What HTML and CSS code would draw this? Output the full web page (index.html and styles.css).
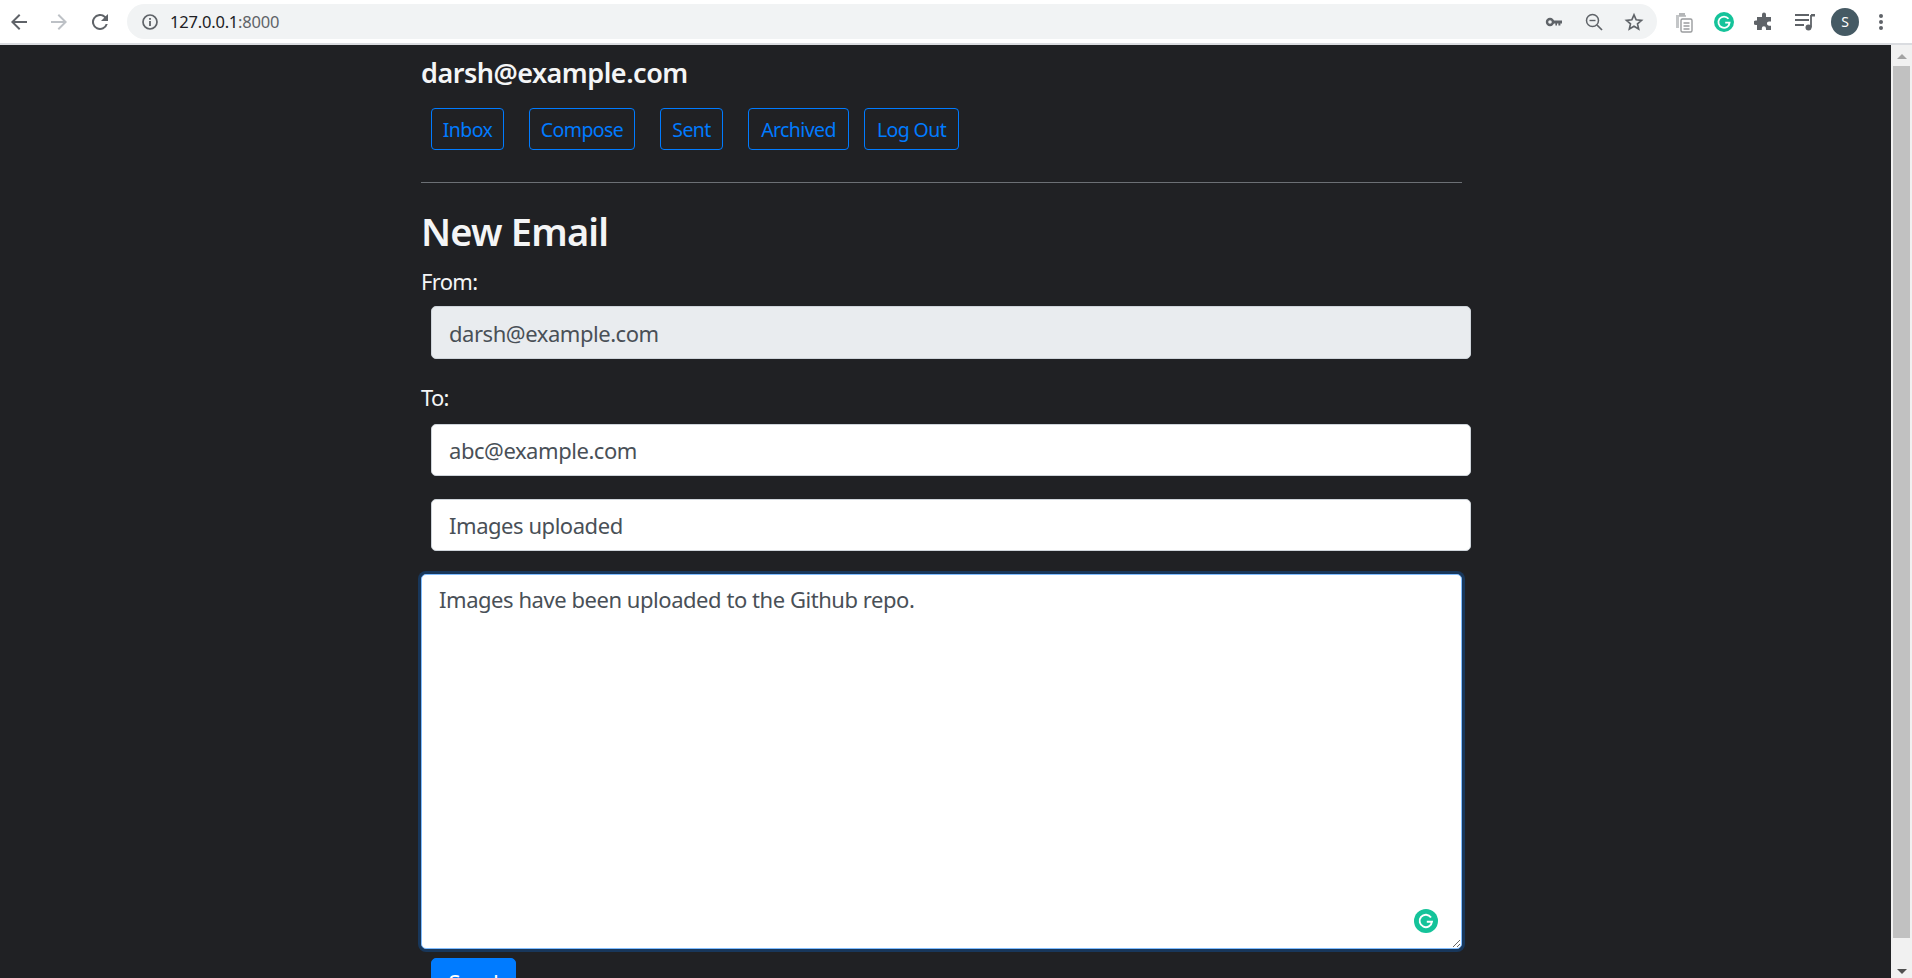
FILE: index.html
```html
<!DOCTYPE html>
<html lang="en">
<head>
    <meta charset="UTF-8">
    <meta name="viewport" content="width=device-width, initial-scale=1.0">
    <title>Mail</title>
    <link rel="stylesheet" href="styles.css">
</head>
<body>
    <header class="toolbar">
        <svg class="tool" width="24" height="24" viewBox="0 0 24 24"><path d="M20 11H7.8l5.6-5.6L12 4l-8 8 8 8 1.4-1.4L7.8 13H20z" fill="#5f6368"/></svg>
        <svg class="tool tool-forward" width="24" height="24" viewBox="0 0 24 24"><path d="M12 4l-1.4 1.4 5.6 5.6H4v2h12.2l-5.6 5.6L12 20l8-8z" fill="#bdc1c6"/></svg>
        <svg class="tool tool-reload" width="24" height="24" viewBox="0 0 24 24"><path d="M17.65 6.35A8 8 0 1 0 19.73 14h-2.08A6 6 0 1 1 12 6c1.66 0 3.14.69 4.22 1.78L13 11h7V4z" fill="#5f6368"/></svg>
        <div class="omnibox">
            <svg width="18" height="18" viewBox="0 0 18 18"><circle cx="9" cy="9" r="7" fill="none" stroke="#5f6368" stroke-width="1.7"/><rect x="8.1" y="8" width="1.8" height="5" fill="#5f6368"/><rect x="8.1" y="5" width="1.8" height="1.8" fill="#5f6368"/></svg>
            <span class="url">127.0.0.1<span class="url-port">:8000</span></span>
            <span class="omni-icons">
                <svg width="20" height="20" viewBox="0 0 20 20"><circle cx="6" cy="10" r="3" fill="none" stroke="#5f6368" stroke-width="2.4"/><path d="M9 8.6h9v2.8h-1.6v2h-2v-2h-1.4v2h-1.6v-2H9z" fill="#5f6368"/></svg>
                <svg width="20" height="20" viewBox="0 0 20 20"><circle cx="8.5" cy="8.5" r="6" fill="none" stroke="#5f6368" stroke-width="1.5"/><path d="M13 13l5 5" stroke="#5f6368" stroke-width="1.7"/><path d="M5.5 8.5h6" stroke="#5f6368" stroke-width="1.4"/></svg>
                <svg width="20" height="20" viewBox="0 0 24 24"><path d="M12 3.5l2.6 5.9 6.4.6-4.8 4.2 1.4 6.3-5.6-3.3-5.6 3.3 1.4-6.3L3 10l6.4-.6z" fill="none" stroke="#5f6368" stroke-width="2"/></svg>
            </span>
        </div>
        <div class="extensions">
            <svg width="20" height="22" viewBox="0 0 20 22"><path d="M2 4h10v2H5v11H2z" fill="#c4c6c8"/><path d="M5 2h6v3H5z" fill="#b4b6b8"/><rect x="7" y="8" width="11" height="13" rx="1.5" fill="#fff" stroke="#9a9c9e" stroke-width="1.4"/><path d="M9.5 12h6M9.5 15h6M9.5 18h6" stroke="#9a9c9e" stroke-width="1.3"/></svg>
            <span class="g-badge">
                <svg width="20" height="20" viewBox="0 0 20 20"><circle cx="10" cy="10" r="10" fill="#15c39a"/><path d="M14.5 6.8A5.6 5.6 0 1 0 15.6 10.6H11.2" fill="none" stroke="#fff" stroke-width="1.8"/></svg>
            </span>
            <svg width="20" height="20" viewBox="0 0 20 20"><path d="M8 2.5a2 2 0 0 1 4 0V5h5v4.5h-2a2.1 2.1 0 0 0 0 4.2h2V18h-5v-1.6a2.1 2.1 0 0 0-4.2 0V18H3v-5H1.800a2.200 2.200 0 0 1 0-4.400H3V5h5z" fill="#5f6368"/></svg>
            <svg width="22" height="20" viewBox="0 0 22 20"><path d="M1 3h14M1 8h14M1 13h9" stroke="#5f6368" stroke-width="1.800"/><path d="M17 3v12.500" stroke="#5f6368" stroke-width="1.800"/><path d="M17 2h4v2.500h-4z" fill="#5f6368"/><circle cx="14.500" cy="15.500" r="3" fill="#5f6368"/></svg>
            <span class="avatar">S</span>
            <svg class="menu-dots" width="6" height="18" viewBox="0 0 6 18"><circle cx="3" cy="3" r="2" fill="#5f6368"/><circle cx="3" cy="9" r="2" fill="#5f6368"/><circle cx="3" cy="15" r="2" fill="#5f6368"/></svg>
        </div>
    </header>

    <div class="viewport">
        <main class="container">
            <h2 class="user">darsh@example.com</h2>
            <nav class="nav-row">
                <button class="btn-nav btn-inbox">Inbox</button>
                <button class="btn-nav btn-compose">Compose</button>
                <button class="btn-nav btn-sent">Sent</button>
                <button class="btn-nav btn-archived">Archived</button>
                <button class="btn-nav btn-logout">Log Out</button>
            </nav>
            <hr class="rule">
            <h3 class="title">New Email</h3>
            <form class="compose">
                <label class="field-label label-from" for="from">From:</label>
                <input class="field field-from" id="from" value="darsh@example.com" disabled>
                <label class="field-label label-to" for="to">To:</label>
                <input class="field field-to" id="to" value="abc@example.com">
                <input class="field field-subject" value="Images uploaded">
                <div class="body-wrap">
                    <textarea class="body-input">Images have been uploaded to the Github repo.</textarea>
                    <svg class="g-float" width="24" height="24" viewBox="0 0 24 24"><circle cx="12" cy="12" r="12" fill="#15c39a"/><path d="M17 8.500A6.200 6.200 0 1 0 18 12.700H12.800" fill="none" stroke="#fff" stroke-width="1.900"/></svg>
                </div>
                <button type="button" class="btn-send">Send</button>
            </form>
        </main>
        <div class="scrollbar">
            <span class="arrow-up"></span>
            <span class="thumb"></span>
            <span class="arrow-down"></span>
        </div>
    </div>
</body>
</html>
```

FILE: styles.css
```css
html, body {
    margin: 0;
    height: 978px;
    overflow: hidden;
}
body {
    font-family: "Noto Sans", "Open Sans", Arial, sans-serif;
    background-color: #202124;
    color: #f4f5f6;
    display: flex;
    flex-direction: column;
}
.toolbar {
    height: 43px;
    flex: none;
    display: flex;
    align-items: center;
    background: #fff;
    border-bottom: 2px solid #dadce0;
    padding-left: 7px;
}
.tool-forward {
    margin-left: 16px;
}
.tool-reload {
    margin-left: 17px;
}
.omnibox {
    width: 1530px;
    height: 35px;
    margin-left: 15px;
    background: #f1f3f4;
    border-radius: 18px;
    display: flex;
    align-items: center;
    padding-left: 14px;
    box-sizing: border-box;
}
.url {
    margin-left: 11px;
    font-size: 16.5px;
    letter-spacing: -0.2px;
    color: #202124;
}
.url-port {
    color: #5f6368;
}
.omni-icons {
    margin-left: auto;
    margin-right: 13px;
    display: flex;
    gap: 20px;
}
.extensions {
    margin-left: 17px;
    display: flex;
    align-items: center;
    gap: 20px;
}
.g-badge {
    display: flex;
}
.avatar {
    width: 28px;
    height: 28px;
    margin-left: -5px;
    border-radius: 50%;
    background: #455a64;
    color: #fff;
    font-size: 14px;
    display: flex;
    align-items: center;
    justify-content: center;
}
.menu-dots {
    margin-left: -1px;
}
.viewport {
    flex: 1;
    display: flex;
    min-height: 0;
}
.container {
    flex: 1;
    padding-left: 421px;
    min-width: 0;
    overflow: hidden;
}
.user {
    margin: 13px 0 0;
    font-size: 27px;
    line-height: 30px;
    font-weight: 600;
    letter-spacing: -0.5px;
}
.nav-row {
    display: flex;
    margin: 20px 0 0 10px;
}
.btn-nav {
    height: 42px;
    padding: 0;
    background: transparent;
    border: 1px solid #007bff;
    border-radius: 4px;
    color: #007bff;
    font-family: inherit;
    font-size: 19.5px;
    letter-spacing: -0.6px;
}
.btn-inbox { width: 73px; }
.btn-compose { width: 106px; margin-left: 25px; }
.btn-sent { width: 63px; margin-left: 25px; }
.btn-archived { width: 101px; margin-left: 25px; }
.btn-logout { width: 95px; margin-left: 15px; }
.rule {
    width: 1041px;
    margin: 32px 0 0;
    border: 0;
    border-top: 1px solid #6c7075;
}
.title {
    margin: 24px 0 0;
    font-size: 38px;
    line-height: 48px;
    font-weight: 600;
    letter-spacing: -0.8px;
}
.compose {
    display: flex;
    flex-direction: column;
    align-items: flex-start;
}
.field-label {
    font-size: 22px;
    line-height: 28px;
    letter-spacing: -0.7px;
}
.label-from {
    margin-top: 12px;
}
.label-to {
    margin-top: 24px;
}
.field {
    width: 1040px;
    height: 52px;
    box-sizing: border-box;
    margin-left: 10px;
    padding: 0 17px;
    border: 1px solid #ced4da;
    border-radius: 5px;
    background: #fff;
    color: #495057;
    font-family: inherit;
    font-size: 22px;
    letter-spacing: -0.45px;
}
.field-from {
    height: 53px;
    margin-top: 11px;
    background: #e9ecef;
}
.field-to {
    margin-top: 13px;
}
.field-subject {
    margin-top: 23px;
}
.body-wrap {
    position: relative;
    margin-top: 23px;
    height: 375px;
}
.body-input {
    display: block;
    width: 1041px;
    height: 375px;
    box-sizing: border-box;
    padding: 8px 17px;
    border: 1px solid #80bdff;
    border-radius: 5px;
    box-shadow: 0 0 0 3px rgba(0, 123, 255, .25);
    outline: 0;
    resize: both;
    background: #fff;
    color: #495057;
    font-family: inherit;
    font-size: 22px;
    line-height: 32px;
    letter-spacing: -0.45px;
}
.g-float {
    position: absolute;
    right: 24px;
    bottom: 16px;
}
.btn-send {
    margin: 9px 0 0 10px;
    width: 85px;
    height: 48px;
    border: 1px solid #007bff;
    border-radius: 5px;
    background: #007bff;
    color: #fff;
    font-family: inherit;
    font-size: 22px;
    letter-spacing: -0.45px;
}
.scrollbar {
    width: 21px;
    flex: none;
    background: #f1f1f1;
    display: flex;
    flex-direction: column;
    align-items: center;
}
.thumb {
    width: 17px;
    height: 872px;
    margin: 7px 0 0;
    background: #c1c1c1;
}
.arrow-up, .arrow-down {
    width: 0;
    height: 0;
    border-left: 5px solid transparent;
    border-right: 5px solid transparent;
}
.arrow-up {
    margin-top: 9px;
    border-bottom: 5px solid #a3a3a3;
}
.arrow-down {
    margin-top: 31px;
    border-top: 5px solid #505050;
}
```
